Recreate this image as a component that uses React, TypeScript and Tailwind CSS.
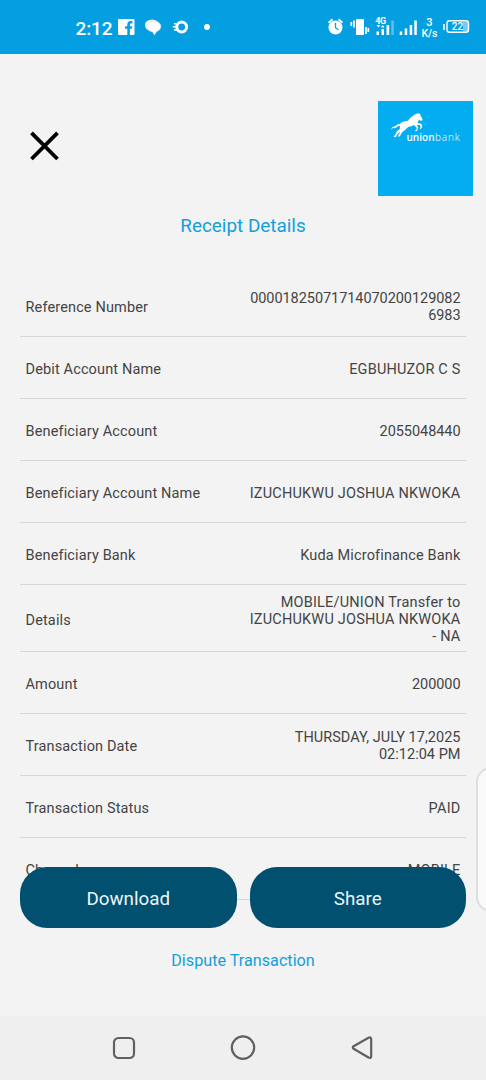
const rows = [
  { label: "Reference Number", lines: ["00001825071714070200129082", "6983"], spacing: "tracking-[-0.06px]" },
  { label: "Debit Account Name", lines: ["EGBUHUZOR C S"], spacing: "tracking-[0.18px]" },
  { label: "Beneficiary Account", lines: ["2055048440"], spacing: "tracking-[-0.06px]" },
  { label: "Beneficiary Account Name", lines: ["IZUCHUKWU JOSHUA NKWOKA"], spacing: "tracking-[0.2px]" },
  { label: "Beneficiary Bank", lines: ["Kuda Microfinance Bank"], spacing: "tracking-[0.15px]" },
  { label: "Details", lines: ["MOBILE/UNION Transfer to", "IZUCHUKWU JOSHUA NKWOKA", "- NA"], spacing: "tracking-[0.2px]" },
  { label: "Amount", lines: ["200000"], spacing: "tracking-[-0.06px]" },
  { label: "Transaction Date", lines: ["THURSDAY, JULY 17,2025", "02:12:04 PM"], spacing: "tracking-[0.02px]" },
  { label: "Transaction Status", lines: ["PAID"], spacing: "tracking-[0.2px]" },
  { label: "Channel", lines: ["MOBILE"], spacing: "tracking-[0.2px]" },
];

export default function App() {
  return (
    <div className="relative flex h-[1080px] w-[486px] flex-col overflow-hidden bg-[#f3f3f3] font-['Roboto',sans-serif] text-[#444]">
      <StatusBar />

      <header className="flex h-[142px] shrink-0 items-start justify-between pr-[13px] pl-[30px] pt-[47px]">
        <svg className="mt-[30px]" width="29" height="30" viewBox="0 0 29 30" fill="none" stroke="#000" strokeWidth="3.8">
          <path d="M1.5 1.8 27.5 28M27.5 1.8 1.5 28" />
        </svg>
        <UnionLogo />
      </header>

      <h1 className="mt-[18px] h-6 shrink-0 text-center text-[18.9px] leading-6 text-[#129fdb]">Receipt Details</h1>

      <dl className="mx-5 mt-[37px] shrink-0">
        {rows.map((row) => (
          <div key={row.label} className="flex min-h-[62px] items-center justify-between border-b border-[#d6d6d6] px-[5.5px] pt-[9px] pb-[6px] text-[14.5px] leading-[17px]">
            <dt className="pt-px tracking-[0.14px]">{row.label}</dt>
            <dd className={`text-right ${row.spacing}`}>
              {row.lines.map((line) => (
                <div key={line} className="whitespace-nowrap">{line}</div>
              ))}
            </dd>
          </div>
        ))}
      </dl>

      <div className="relative z-10 mx-5 -mt-[33px] flex shrink-0 gap-[13px]">
        <button className="h-[61px] flex-1 rounded-[27px] bg-[#01506f] pt-[3px] text-[18.8px] text-[#eaf5fa]">Download</button>
        <button className="h-[61px] flex-1 rounded-[27px] bg-[#01506f] pt-[3px] text-[18.8px] text-[#eaf5fa]">Share</button>
      </div>
      <button className="mt-[21px] h-6 shrink-0 text-[16.2px] leading-6 text-[#129fdb]">Dispute Transaction</button>

      <NavBar />

      {/* edge panel handle peeking in from the right */}
      <div className="absolute -right-5 top-[767px] h-[145px] w-[30px] rounded-[18px] border-2 border-[#dedede] bg-[#f9f9f9]" />
    </div>
  );
}

function StatusBar() {
  return (
    <div className="h-[54px] shrink-0 bg-[#049fe1]">
      <svg width="486" height="54" viewBox="0 0 486 54" fill="#fff">
        <text x="75.5" y="34.5" fontSize="19" fontWeight="500" textLength="37">2:12</text>

        {/* facebook */}
        <rect x="118" y="19" width="16.5" height="16" rx="1" />
        <path d="M127.3 35v-6.2h-2.2v-2.6h2.2v-1.6c0-2.2 1.3-3.5 3.3-3.5h1.8v2.5h-1.3c-.9 0-1.2.5-1.2 1.2v1.4h2.4l-.4 2.6h-2V35z" fill="#049fe1" />

        {/* chat bubbles */}
        <path d="M145 25c0-3.2 3-5.3 7-5.3s7 2 7 5-2 6-7 6h-2.5c-2.5-.5-4.5-2.7-4.5-5.7z" />
        <path d="M147 26.3c0-3.1 3-5.1 7-5.1s7 2.1 7 5.3c0 2.7-2.3 4.5-4.3 5.1l-2.2 3.6-2-3.3c-3.200-.3-5.500-2.400-5.500-5.600z" stroke="#8bd2f0" strokeWidth=".5" />

        {/* ring with side ticks */}
        <circle cx="181.700" cy="27" r="4.900" fill="none" stroke="#fff" strokeWidth="3" />
        <path d="M174 23.700h4M172.700 26.800h5M174 29.900h4" stroke="#fff" strokeWidth="1.500" />
        <circle cx="207" cy="27" r="2.900" />

        {/* alarm */}
        <circle cx="335.500" cy="27.500" r="7" />
        <path d="M328.500 22.700l4-3.500M342.500 22.700l-4-3.500" stroke="#fff" strokeWidth="1.800" />
        <path d="M335.500 23v4.700l3 2" fill="none" stroke="#049fe1" strokeWidth="1.300" />

        {/* vibrate */}
        <rect x="356" y="19" width="8" height="16" rx=".7" />
        <path d="M351.300 22v4M354 20.500v7M366 27v7M368.300 28v4" stroke="#fff" strokeWidth="1.700" />

        {/* mobile signals */}
        <text x="375.200" y="24" fontSize="9" fontWeight="700" textLength="11">4G</text>
        <path d="M376.500 25h4l-2 2.500zM381 27.500h3.500l-1.700-2.500z" />
        <path d="M376.500 31.500h2.500V35h-2.500zM381.500 29h2.500v6h-2.500zM386.500 25h2.700v10h-2.700z" />
        <path d="M391.300 20.500h2.500V35h-2.500z" opacity=".35" />
        <path d="M399.700 31.500h2.500V35h-2.500zM404.700 28.500h2.500V35h-2.500zM409.700 25h2.500v10h-2.500zM414.300 20.500h2.500V35h-2.500z" />

        <text x="429.500" y="26" fontSize="11" fontWeight="500" textAnchor="middle">3</text>
        <text x="421.500" y="37" fontSize="10.500" fontWeight="500" textLength="16">K/s</text>

        {/* battery */}
        <path d="M443.200 24h1.600v6h-1.600z" />
        <rect x="463" y="21.500" width="5" height="10" fill="#77cbf0" />
        <rect x="447" y="20.800" width="21.500" height="11.500" rx="2.500" fill="none" stroke="#fff" strokeWidth="1.400" />
        <text x="457.500" y="30.300" fontSize="10" fontWeight="500" textAnchor="middle">22</text>
      </svg>
    </div>
  );
}

function UnionLogo() {
  return (
    <div className="h-[95px] w-[95px] bg-[#03adf0]">
      <svg width="95" height="95" viewBox="0 0 95 95" fill="#fff">
        <path
          transform="translate(-8 -11) scale(.33333)"
          d="M151 73l1 5c3 3 5 7 6 12l-5 3-5-4c-3 2-4 6-5 10l11 2 3 10-5 6-3-1 3-6-3-5-9 0 5 7-4 11-6 1 1-3 4-3 0-5-8-8c-5 3-11 4-17 6-6 4-9 9-14 12l-6 5-5 11-7 1 3-6 5-8-5 2-5 6-3 7-7 1 2-5 4-5 4-9 8-5 1-10c-8-1-10 6-16 7l-6-1-3 5c-1-5 1-8 5-9 7 0 11-9 20-9 7-8 15-7 24-9 5-7 10-11 17-16 6-4 11-6 19-5z"
        />
        <text x="28.500" y="39.500" fontSize="10" fontFamily="'Open Sans', sans-serif" fontWeight="600" textLength="28">union</text>
        <text x="57" y="39.500" fontSize="10" fontFamily="'Open Sans', sans-serif" fontWeight="300" textLength="24.500">bank</text>
      </svg>
    </div>
  );
}

function NavBar() {
  return (
    <nav className="mt-auto flex h-16 shrink-0 items-center justify-center gap-[95px] bg-[#efefef]">
      <svg width="24" height="26" viewBox="0 0 24 26" fill="none" stroke="#606060" strokeWidth="2.2">
        <rect x="2" y="3" width="20" height="20" rx="4.500" />
      </svg>
      <svg width="24" height="26" viewBox="0 0 24 26" fill="none" stroke="#606060" strokeWidth="2.2" overflow="visible">
        <circle cx="12" cy="12.600" r="11.200" />
      </svg>
      <svg width="24" height="26" viewBox="0 0 24 26" fill="none" stroke="#606060" strokeWidth="2.2" strokeLinejoin="round">
        <path d="M3.600 11.200 18.500 2.700q2.700-1 2.700 1.700v16.600q0 2.700-2.700 1.500L3.600 13.800q-1.600-1.300 0-2.600z" />
      </svg>
    </nav>
  );
}
